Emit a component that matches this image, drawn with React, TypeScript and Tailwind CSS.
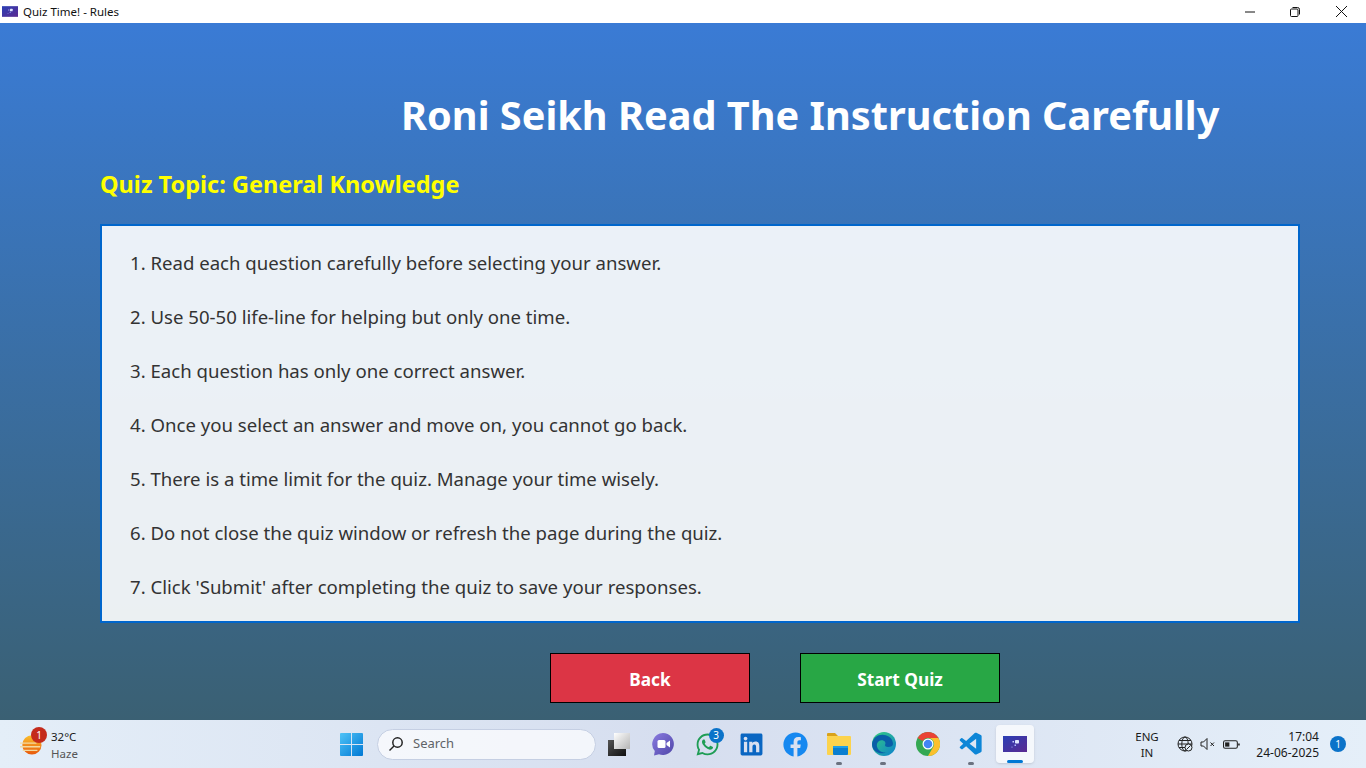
import React from "react";
import { FaWhatsapp, FaLinkedin, FaFacebook } from "react-icons/fa";
import { VscVscode } from "react-icons/vsc";

const rules = [
  "1. Read each question carefully before selecting your answer.",
  "2. Use 50-50 life-line for helping but only one time.",
  "3. Each question has only one correct answer.",
  "4. Once you select an answer and move on, you cannot go back.",
  "5. There is a time limit for the quiz. Manage your time wisely.",
  "6. Do not close the quiz window or refresh the page during the quiz.",
  "7. Click 'Submit' after completing the quiz to save your responses.",
];

function AppIcon({ className, id }: { className: string; id: string }) {
  return (
    <svg viewBox="0 0 24 16" className={className}>
      <defs>
        <linearGradient id={id} x1="0" y1="0" x2="1" y2="1">
          <stop offset="0" stopColor="#2a3fb5" />
          <stop offset="1" stopColor="#5b2a91" />
        </linearGradient>
      </defs>
      <rect width="24" height="16" fill={`url(#${id})`} />
      <rect x="12" y="4" width="4" height="3.500" rx=".8" fill="#dfe6ff" />
      <rect x="9.500" y="5" width="1.500" height="1.500" fill="#c7d0ff" />
      <rect x="11.500" y="8.500" width="1.500" height="1.500" fill="#aab6ff" />
      <circle cx="9" cy="11" r="0.600" fill="#aab6ff" />
    </svg>
  );
}

function Slot({ children, dot, active }: { children: React.ReactNode; dot?: boolean; active?: boolean }) {
  return (
    <div className="relative w-[44px] h-[44px] flex items-center justify-center">
      {active && <span className="absolute left-[3px] top-[3px] w-[38px] h-[38px] rounded-[4px] bg-white/70 shadow-sm" />}
      <span className="relative flex items-center justify-center">{children}</span>
      {dot && <span className="absolute bottom-[1px] left-[19px] w-[6px] h-[3px] rounded-full bg-[#6b7280]" />}
      {active && <span className="absolute bottom-[3px] left-[14px] w-[16px] h-[3px] rounded-full bg-[#0078d4]" />}
    </div>
  );
}

export default function App() {
  return (
    <div className="w-[1366px] h-[768px] overflow-hidden flex flex-col font-['Noto_Sans','Open_Sans',sans-serif]">
      <div className="h-[23px] bg-white flex items-center text-[11.5px] text-[#111] shrink-0">
        <AppIcon id="appg1" className="w-[16px] h-[11px] ml-[2px] mr-[5px]" />
        <span>Quiz Time! - Rules</span>
        <div className="ml-auto flex items-center mr-[2px]">
          <div className="w-[44px] flex justify-center">
            <svg width="10" height="10" viewBox="0 0 10 10"><path d="M0 5h10" stroke="#111" strokeWidth="1" /></svg>
          </div>
          <div className="w-[46px] flex justify-center">
            <svg width="10" height="10" viewBox="0 0 10 10" fill="none" stroke="#111"><rect x="0.500" y="2" width="7.500" height="7.500" rx="1" /><path d="M2.500 .5h5a2 2 0 0 1 2 2v5" /></svg>
          </div>
          <div className="w-[46px] flex justify-center">
            <svg width="11" height="11" viewBox="0 0 11 11"><path d="M0 0l11 11M11 0L0 11" stroke="#111" strokeWidth="1" /></svg>
          </div>
        </div>
      </div>

      <main className="h-[697px] bg-gradient-to-b from-[#3a7bd5] to-[#3a6073] flex flex-col px-[100px]">
        <h1 className="mt-[62px] ml-[301px] text-[39.7px] leading-[61px] font-bold text-white whitespace-nowrap">
          Roni Seikh Read The Instruction Carefully
        </h1>
        <h2 className="mt-[22px] text-[23.5px] leading-[32px] font-bold text-[#ffff00]">Quiz Topic: General Knowledge</h2>
        <div className="mt-[24px] h-[399px] w-[1200px] border-2 border-[#0066cc] bg-white/90 px-[28px] pt-[22px]">
          <ul className="flex flex-col gap-[24px]">
            {rules.map((r) => (
              <li key={r} className="text-[18.6px] leading-[30px] text-[#333]">{r}</li>
            ))}
          </ul>
        </div>
        <div className="mt-[30px] ml-[450px] flex gap-[50px]">
          <button className="w-[200px] h-[50px] pt-[3px] bg-[#dc3545] border border-black text-white text-[17.3px] font-bold">Back</button>
          <button className="w-[200px] h-[50px] pt-[3px] bg-[#28a745] border border-black text-white text-[17.3px] font-bold">Start Quiz</button>
        </div>
      </main>

      <footer className="h-[48px] bg-gradient-to-r from-[#e4eef8] via-[#d6deef] to-[#e5eff9] flex items-center relative shrink-0 text-[#1a1a1a]">
        <div className="w-[329px] flex items-center pl-[20px]">
          <div className="relative w-[22px] h-[22px] mr-[9px]">
            <svg viewBox="0 0 24 24" className="w-[22px] h-[22px]">
              <defs>
                <linearGradient id="sun" x1="0" y1="0" x2="0" y2="1">
                  <stop offset="0" stopColor="#fbc02d" />
                  <stop offset="1" stopColor="#e8590c" />
                </linearGradient>
              </defs>
              <circle cx="13" cy="13" r="10.500" fill="url(#sun)" />
              <path d="M0 11h18M0 15h22M3 19h16" stroke="#f3d9a0" strokeWidth="1.500" />
            </svg>
            <span className="absolute -top-[6px] left-[11px] w-[16px] h-[16px] rounded-full bg-[#c42b1c] text-white text-[10px] leading-[16px] text-center">1</span>
          </div>
          <div className="flex flex-col text-[11.5px] leading-[17px] pt-[1px]">
            <span>32°C</span>
            <span className="text-[#555]">Haze</span>
          </div>
        </div>
        <Slot>
          <svg viewBox="0 0 24 24" className="w-[23px] h-[23px]">
            <defs>
              <linearGradient id="win" x1="0" y1="0" x2="1" y2="1">
                <stop offset="0" stopColor="#4fc3f7" />
                <stop offset="1" stopColor="#0078d4" />
              </linearGradient>
            </defs>
            <path d="M0 1a1 1 0 0 1 1-1h10.500v11.500H0zM12.500 0H23a1 1 0 0 1 1 1v10.500H12.500zM0 12.500h11.500V24H1a1 1 0 0 1-1-1zM12.500 12.500H24V23a1 1 0 0 1-1 1H12.500z" fill="url(#win)" />
          </svg>
        </Slot>
        <div className="ml-[4px] w-[219px] h-[31px] rounded-full bg-white/70 border border-[#c5cfe3] flex items-center pl-[10px] text-[13px] text-[#5f6368]">
          <svg viewBox="0 0 16 16" className="w-[16px] h-[16px] mr-[9px]" fill="none" stroke="#222" strokeWidth="1.500">
            <circle cx="9.500" cy="6.500" r="4.700" />
            <path d="M6 10L1.500 14.500" />
          </svg>
          Search
        </div>
        <div className="ml-[1px] flex items-center">
          <Slot>
            <div className="relative w-[22px] h-[23px]">
              <span className="absolute left-0 bottom-0 w-[18px] h-[16px] bg-gradient-to-br from-[#555] to-[#111]" />
              <span className="absolute right-0 top-0 w-[16px] h-[16px] bg-gradient-to-br from-[#fff] to-[#b5b5b5]" />
            </div>
          </Slot>
          <Slot>
            <svg viewBox="0 0 24 24" className="w-[24px] h-[24px]">
              <defs>
                <linearGradient id="meet" x1="0" y1="0" x2="1" y2="1">
                  <stop offset="0" stopColor="#8a7be0" />
                  <stop offset="1" stopColor="#4f46a8" />
                </linearGradient>
              </defs>
              <path d="M12 1a11 11 0 1 1-4 21.300L3 23.500l.8-4.500A11 11 0 0 1 12 1z" fill="url(#meet)" />
              <rect x="6.500" y="8" width="8" height="8" rx="1.500" fill="#fff" />
              <path d="M15.500 11l3.500-2.500v7L15.500 13z" fill="#fff" />
            </svg>
          </Slot>
          <Slot>
            <FaWhatsapp className="w-[25px] h-[25px] text-[#1f9d55]" />
            <span className="absolute -top-[4px] left-[14px] w-[15px] h-[15px] rounded-full bg-[#0b73c9] text-white text-[10px] leading-[15px] text-center">3</span>
          </Slot>
          <Slot><FaLinkedin className="w-[25px] h-[25px] text-[#0a66c2]" /></Slot>
          <Slot><FaFacebook className="w-[25px] h-[25px] ml-[1px] text-[#1688f0]" /></Slot>
          <Slot dot>
            <svg viewBox="0 0 24 24" className="w-[24px] h-[24px]">
              <path d="M0 2a1 1 0 0 1 1-1h7l3 3H0z" fill="#d9a21b" />
              <rect x="0" y="4" width="24" height="19" rx="1" fill="#fcd34d" />
              <rect x="6" y="14" width="15" height="9" rx="1" fill="#0b7fd0" />
              <rect x="6" y="14" width="15" height="2" fill="#1ea0e8" />
            </svg>
          </Slot>
          <Slot dot>
            <svg viewBox="0 0 24 24" className="w-[24px] h-[24px] ml-[1px]">
              <defs>
                <linearGradient id="edge" x1="0" y1="0" x2="1" y2="1">
                  <stop offset="0" stopColor="#36d07a" />
                  <stop offset="1" stopColor="#0c7fd0" />
                </linearGradient>
              </defs>
              <circle cx="12" cy="12" r="12" fill="url(#edge)" />
              <path d="M0 12C1 5 7 2 12 3c5 .5 9 4 9 9 0 2-2 3-5 3-2 0-3-1-3-2 2-3-2-6-6-4-3 2-3 7 1 10 2 1.500 5 2 7 1-5 3-15 1-15-8z" fill="#0a5ea8" />
            </svg>
          </Slot>
          <Slot>
            <svg viewBox="0 0 24 24" className="w-[24px] h-[24px] ml-[1px]">
              <circle cx="12" cy="12" r="12" fill="#34a853" />
              <path d="M12 0a12 12 0 0 1 10.400 6H12a6 6 0 0 0-5.200 3L1.600 6A12 12 0 0 1 12 0z" fill="#ea4335" />
              <path d="M22.400 6A12 12 0 0 1 12 24l5.200-9A6 6 0 0 0 12 6z" fill="#fbc02d" />
              <circle cx="12" cy="12" r="5.500" fill="#fff" />
              <circle cx="12" cy="12" r="4.300" fill="#4285f4" />
            </svg>
          </Slot>
          <Slot dot><VscVscode className="w-[27px] h-[27px] text-[#0d86d7]" /></Slot>
          <Slot active><AppIcon id="appg2" className="w-[24px] h-[18px]" /></Slot>
        </div>

        <div className="ml-auto flex items-center text-[#1a1a1a]">
          <div className="w-[40px] text-center text-[11.5px] leading-[16px] pt-[1px]">ENG<br />IN</div>
          <div className="ml-[10px] flex items-center gap-[7px]">
            <svg viewBox="0 0 16 16" className="w-[16px] h-[16px]" fill="none" stroke="#222" strokeWidth="1">
              <circle cx="8" cy="8" r="7" />
              <ellipse cx="8" cy="8" rx="3.200" ry="7" />
              <path d="M1 8h14M2 4.500h12M2 11.500h12" />
              <circle cx="11.500" cy="11.500" r="3.500" fill="#e4eef8" />
              <path d="M9.500 13.500l4-4" />
            </svg>
            <svg viewBox="0 0 16 16" className="w-[16px] h-[16px]" fill="none" stroke="#222" strokeWidth="1">
              <path d="M1 6h2.500L7 2.500v11L3.500 10H1z" />
              <path d="M10.500 6.500l3.500 3.500M14 6.500l-3.500 3.500" />
            </svg>
            <svg viewBox="0 0 16 16" className="w-[17px] h-[17px]" fill="none" stroke="#222" strokeWidth="1">
              <rect x=".5" y="4.500" width="13" height="7" rx="1.500" />
              <rect x="2" y="6" width="4" height="4" fill="#222" stroke="none" />
              <path d="M15 7v2" strokeWidth="1.500" />
            </svg>
          </div>
          <div className="ml-[9px] w-[70px] text-right text-[12px] leading-[16px] pt-[1px]">17:04<br />24-06-2025</div>
          <div className="ml-[11px] mr-[20px] w-[16px] h-[16px] rounded-full bg-[#0b73c9] text-white text-[10px] leading-[16px] text-center">1</div>
        </div>
      </footer>
    </div>
  );
}
